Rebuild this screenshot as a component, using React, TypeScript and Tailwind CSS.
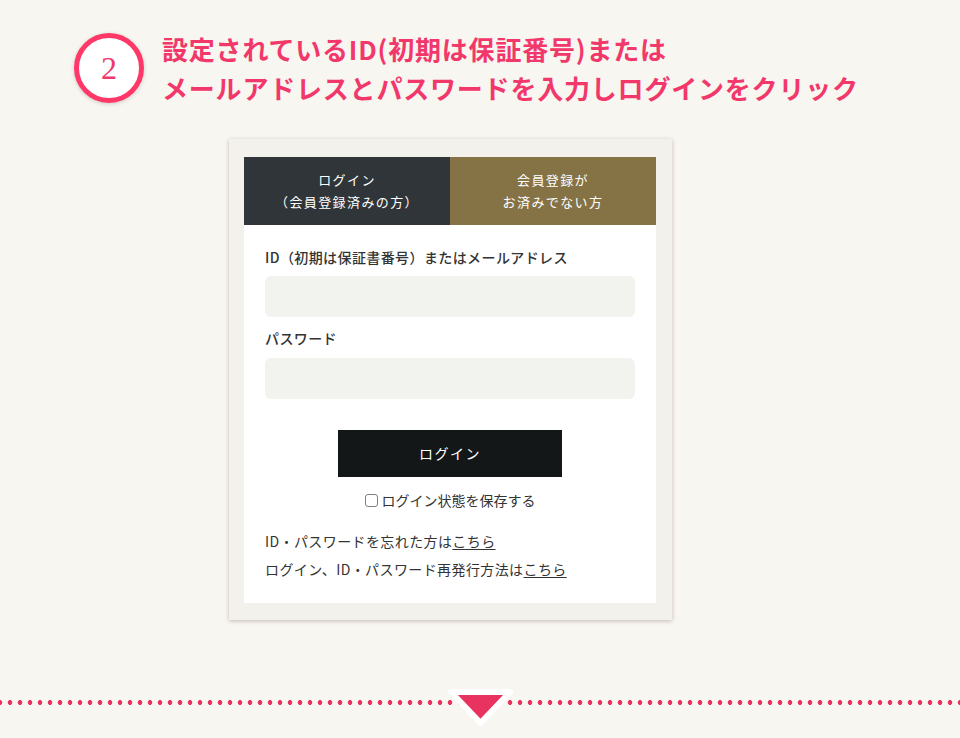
const jp = '"Noto Sans CJK JP", "Noto Sans", sans-serif';

// Step header: numbered badge plus two-line instruction.
function StepHeading() {
  return (
    <div className="flex items-center pl-[74px]">
      <div className="flex h-[70px] w-[70px] shrink-0 items-center justify-center rounded-full border-[5px] border-[#ff3868] bg-white shadow-[0_1px_4px_rgba(0,0,0,0.18)]">
        <span className="text-[32px] leading-none text-[#f0386b]" style={{ fontFamily: '"Liberation Serif", serif' }}>
          2
        </span>
      </div>
      <div
        className="ml-[18px] text-[26px] font-bold leading-[39px] tracking-[0.8px] text-[#f2386b]"
        style={{ fontFamily: jp }}
      >
        <div>設定されているID(初期は保証番号)または</div>
        <div>メールアドレスとパスワードを入力しログインをクリック</div>
      </div>
    </div>
  );
}

function LoginCard() {
  return (
    <div className="ml-[229px] w-[443px] bg-[#f2f1ec] pb-[17px] pl-[15px] pr-[16px] pt-[18px] shadow-[0_1px_4px_rgba(110,70,70,0.35)]">
      <div className="grid grid-cols-2 text-[13px] leading-[22px] tracking-[1.4px] text-white">
        <div className="flex h-[68px] flex-col items-center justify-center bg-[#2f3538]">
          <span>ログイン</span>
          <span>（会員登録済みの方）</span>
        </div>
        <div className="flex h-[68px] flex-col items-center justify-center bg-[#857345]">
          <span>会員登録が</span>
          <span>お済みでない方</span>
        </div>
      </div>
      <div className="bg-white px-[21px] pb-[20px] pt-[22px] text-[14px] tracking-[0.4px] text-[#333]">
        <div className="font-medium leading-[20px]">ID（初期は保証書番号）またはメールアドレス</div>
        <div className="mt-[9px] h-[41px] rounded-[6px] bg-[#f2f2ee]" />
        <div className="mt-[11px] font-medium leading-[20px]">パスワード</div>
        <div className="mt-[10px] h-[41px] rounded-[6px] bg-[#f2f2ee]" />
        <div className="mt-[31px] flex justify-center">
          <button className="h-[47px] w-[224px] bg-[#141718] text-[14px] tracking-[1.5px] text-white">ログイン</button>
        </div>
        <div className="mt-[13px] flex items-center justify-center leading-[20px] tracking-normal">
          <span className="mr-[4px] inline-block h-[13px] w-[13px] rounded-[3px] border-[1.5px] border-[#808080] bg-white" />
          <span>ログイン状態を保存する</span>
        </div>
        <div className="mt-[17px] leading-[28px]">
          <div>
            ID・パスワードを忘れた方は<span className="underline underline-offset-2">こちら</span>
          </div>
          <div>
            ログイン、ID・パスワード再発行方法は<span className="underline underline-offset-2">こちら</span>
          </div>
        </div>
      </div>
    </div>
  );
}

// Dotted separator with the down arrow to the next step.
function NextDivider() {
  return (
    <div className="relative mt-[73px] h-[40px]">
      <div className="absolute left-0 right-0 top-[7px] h-[5px] bg-[radial-gradient(circle,#e8325f_2.2px,transparent_2.6px)] bg-[length:10px_5px] bg-[position:-5px_0]" />
      <svg className="absolute left-[440px] top-[-9px]" width="80" height="46" viewBox="0 0 80 46">
        <polygon
          points="11,8 70,8 40.5,39"
          fill="#e8325f"
          stroke="white"
          strokeWidth="6"
          strokeLinejoin="round"
        />
      </svg>
    </div>
  );
}

export default function App() {
  return (
    <div className="min-h-[738px] w-[960px] overflow-hidden bg-[#f7f6f1] pt-[29px]" style={{ fontFamily: jp }}>
      <StepHeading />
      <div className="mt-[32px]">
        <LoginCard />
      </div>
      <NextDivider />
    </div>
  );
}
